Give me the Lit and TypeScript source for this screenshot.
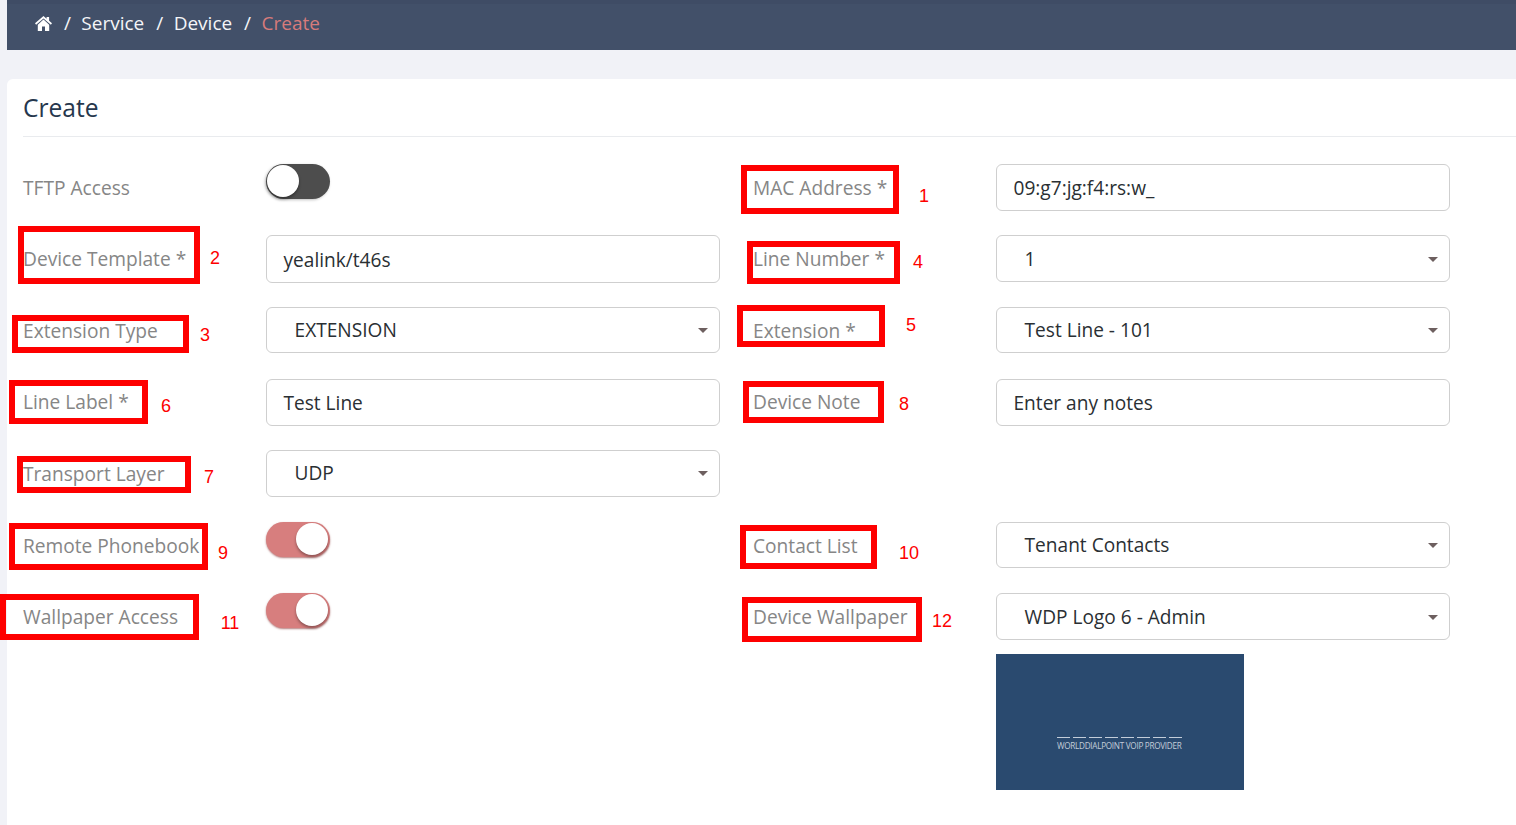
import { LitElement, html, css, svg } from "lit";
import { customElement } from "lit/decorators.js";

type Field =
  | { label: string; kind: "input" | "select"; value: string }
  | { label: string; kind: "toggle"; on: boolean }
  | null;

const ROWS: [Field, Field][] = [
  [{ label: "TFTP Access", kind: "toggle", on: false }, { label: "MAC Address *", kind: "input", value: "09:g7:jg:f4:rs:w_" }],
  [{ label: "Device Template *", kind: "input", value: "yealink/t46s" }, { label: "Line Number *", kind: "select", value: "1" }],
  [{ label: "Extension Type", kind: "select", value: "EXTENSION" }, { label: "Extension *", kind: "select", value: "Test Line - 101" }],
  [{ label: "Line Label *", kind: "input", value: "Test Line" }, { label: "Device Note", kind: "input", value: "Enter any notes" }],
  [{ label: "Transport Layer", kind: "select", value: "UDP" }, null],
  [{ label: "Remote Phonebook", kind: "toggle", on: true }, { label: "Contact List", kind: "select", value: "Tenant Contacts" }],
  [{ label: "Wallpaper Access", kind: "toggle", on: true }, { label: "Device Wallpaper", kind: "select", value: "WDP Logo 6 - Admin" }],
];

// Annotation boxes drawn over the form: x0, y0, x1, y1
const BOXES = [
  [741, 165, 899, 214], [18, 226, 200, 284], [12, 315, 189, 353], [747, 241, 900, 284],
  [737, 305, 885, 347], [9, 380, 148, 424], [17, 456, 191, 493], [743, 381, 884, 423],
  [9, 523, 208, 570], [740, 525, 877, 569], [0, 594, 199, 640], [742, 597, 922, 642],
];
// Annotation numbers: text, centre x, centre y
const NUMS: [string, number, number][] = [
  ["1", 924, 196], ["2", 215, 258], ["3", 205, 335], ["4", 918, 262], ["5", 911, 325], ["6", 166, 406],
  ["7", 209, 477], ["8", 904, 404], ["9", 223, 553], ["10", 909, 553], ["11", 230, 623], ["12", 942, 621],
];

@customElement("app-root")
export class AppRoot extends LitElement {
  static styles = css`
    :host {
      display: block;
      position: relative;
      height: 825px;
      overflow: hidden;
      background: #f1f2f7;
      font-family: "Open Sans", sans-serif;
    }
    .page { padding-left: 7px; }
    .crumbs {
      height: 50px;
      box-sizing: border-box;
      background: #425069;
      border-top: 4px solid #3f4c65;
      padding: 0 0 8px 28px;
      display: flex;
      align-items: center;
      color: #f4f5f8;
      font-size: 19px;
    }
    .crumbs svg { width: 17px; height: 15px; fill: #fff; display: block; }
    .sep { margin: 0 10.5px 0 11.9px; }
    .current { color: #d77b7b; }
    .card {
      margin-top: 29px;
      background: #fff;
      border-radius: 6px 0 0 0;
      padding: 0 0 35px 16px;
      height: 746px;
      box-sizing: border-box;
    }
    .title {
      height: 58px;
      box-sizing: border-box;
      border-bottom: 1px solid #e9ebee;
      font-size: 24.6px;
      line-height: 58px;
      color: #26374d;
    }
    .form {
      margin-top: 26.8px;
      display: grid;
      grid-template-columns: 243px 454px 276px 454px;
      grid-auto-rows: 47.6px;
      row-gap: 24px;
      font-size: 19.1px;
    }
    .label { color: #868686; display: flex; align-items: center; white-space: nowrap; font-size: 19.15px; }
    .label.col2 { padding-left: 33px; }
    .control {
      box-sizing: border-box;
      border: 1px solid #cfcfcf;
      border-radius: 6px;
      height: 47.6px;
      display: flex;
      align-items: center;
      color: #2a2f33;
      white-space: nowrap;
    }
    .input { padding: 1px 0 0 16.5px; }
    .select { padding: 0 11px 0 27.6px; height: 46.4px; justify-content: space-between; }
    .caret {
      width: 0; height: 0;
      margin-top: 1px;
      border-left: 5px solid transparent;
      border-right: 5px solid transparent;
      border-top: 5px solid #6d5f5f;
    }
    .toggle {
      width: 64px; height: 35px;
      box-sizing: border-box;
      border-radius: 18px;
      background: #4d4d4d;
      position: relative;
      box-shadow: -1px 1px 3px rgba(0,0,0,.25);
    }
    .toggle.on { background: #d77e7e; box-shadow: 0 1px 2px rgba(150,70,70,.7); }
    .knob {
      position: absolute;
      top: 1px; left: 1px;
      width: 32px; height: 32px;
      border-radius: 50%;
      background: #fff;
      box-shadow: 0 2px 3px rgba(0,0,0,.35);
    }
    .toggle.on .knob { left: 30px; }
    .preview {
      position: relative;
      margin: 13px 0 0 973px;
      width: 248px; height: 136px;
      background: #2a4a6f;
    }
    .logo { position: absolute; left: 61px; top: 83px; width: 125px; }
    .dashes { display: flex; gap: 3px; }
    .dashes i { flex: 1; height: 1px; background: #c3cdd9; }
    .logo-text {
      margin-top: 3px;
      font: 8.2px/10px "Open Sans", sans-serif;
      letter-spacing: -0.3px;
      color: #c3cdd9;
      white-space: nowrap;
    }
    .box { position: absolute; box-sizing: border-box; border: 6px solid #fe0000; pointer-events: none; }
    .num {
      position: absolute;
      transform: translate(-50%, -50%);
      color: #fe0000;
      font: 18px/20px "Liberation Sans", sans-serif;
    }
  `;

  private home() {
    return html`<svg viewBox="0 0 17 15">${svg`<path d="M8.5 0 11.6 2.7V1h2.5v3.8L17 7.3 15.9 8.7 8.5 2.5 1.1 8.7 0 7.3z"/><path d="M2.8 8.7 8.5 3.6l5.7 5.1V15H10v-4.5H7V15H2.8z"/>`}</svg>`;
  }

  private control(f: Field) {
    if (!f) return html`<div></div>`;
    if (f.kind === "toggle")
      return html`<div><div class="toggle ${f.on ? "on" : ""}"><div class="knob"></div></div></div>`;
    if (f.kind === "select")
      return html`<div class="control select"><span>${f.value}</span><span class="caret"></span></div>`;
    return html`<div class="control input">${f.value}</div>`;
  }

  render() {
    return html`
      <div class="page">
        <div class="crumbs">
          ${this.home()}
          <span class="sep">/</span><span>Service</span>
          <span class="sep">/</span><span>Device</span>
          <span class="sep">/</span><span class="current">Create</span>
        </div>
        <div class="card">
          <div class="title">Create</div>
          <div class="form">
            ${ROWS.map(([a, b]) => html`
              <div class="label">${a?.label ?? ""}</div>
              ${this.control(a)}
              <div class="label col2">${b?.label ?? ""}</div>
              ${this.control(b)}
            `)}
          </div>
          <div class="preview">
            <div class="logo">
              <div class="dashes">${Array.from({ length: 8 }, () => html`<i></i>`)}</div>
              <div class="logo-text">WORLDDIALPOINT VOIP PROVIDER</div>
            </div>
          </div>
        </div>
      </div>
      ${BOXES.map(([x0, y0, x1, y1]) => html`<div class="box" style="left:${x0}px;top:${y0}px;width:${x1 - x0}px;height:${y1 - y0}px"></div>`)}
      ${NUMS.map(([t, x, y]) => html`<div class="num" style="left:${x}px;top:${y}px">${t}</div>`)}
    `;
  }
}
